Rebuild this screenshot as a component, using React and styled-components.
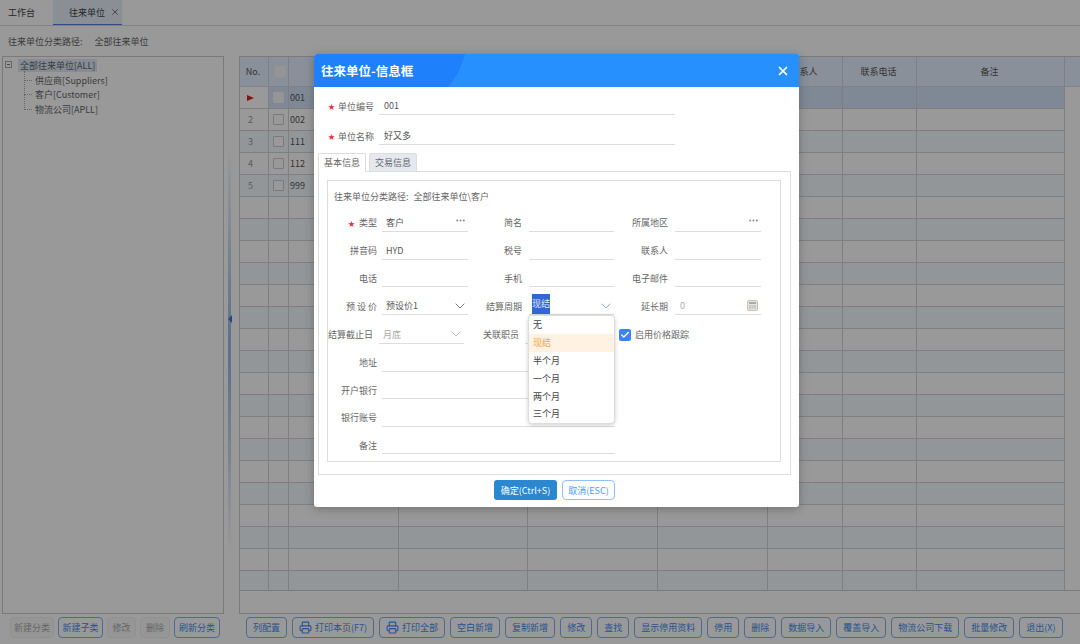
import styled, { createGlobalStyle } from "styled-components"
import { Printer, Check, X, ChevronDown } from "lucide-react"

const GlobalStyle = createGlobalStyle`
    html, body {
        margin: 0;
        padding: 0;
        height: 100%;
        overflow: hidden;
        background: #fff;
    }
    body, input, button {
        font-family: "Noto Sans CJK SC", "Noto Sans", sans-serif;
    }
`

const FONT = 9

const Page = styled.div`
    width: 1080px;
    height: 644px;
    display: flex;
    flex-direction: column;
    font-size: ${FONT}px;
    color: #555;
    overflow: hidden;
`

const TabBar = styled.div`
    height: 25px;
    flex: none;
    display: flex;
    border-bottom: 1px solid #d8d8d8;
`

const PageTab = styled.div`
    height: 25px;
    box-sizing: border-box;
    display: flex;
    align-items: center;
    padding: ${(p) => (p.$active ? "0 2px 0 16px" : "0 18px 0 8px")};
    gap: 5px;
    background: ${(p) => (p.$active ? "#e6effa" : "transparent")};
    border-bottom: ${(p) => (p.$active ? "1px solid #4a80e8" : "none")};
    color: #444;
`

const PathRow = styled.div`
    height: 30px;
    flex: none;
    display: flex;
    align-items: center;
    gap: 12px;
    padding-left: 8px;
    color: #666;
`

const Body = styled.div`
    flex: 1;
    min-height: 0;
    display: flex;
    padding-left: 2px;
`

const TreePanel = styled.div`
    width: 222px;
    box-sizing: border-box;
    height: 558px;
    border: 1px solid #ccc;
    padding-top: 1px;
    position: relative;
`

const TreeNode = styled.div`
    height: 14.7px;
    display: flex;
    align-items: center;
    padding-left: ${(p) => (p.$root ? 15 : 30)}px;
    position: relative;
`

const NodeText = styled.span`
    padding: 0 2px;
    background: ${(p) => (p.$selected ? "#dfeafa" : "transparent")};
    color: #666;
`

const Expander = styled.span`
    position: absolute;
    left: 2px;
    top: 3px;
    width: 7px;
    height: 7px;
    box-sizing: border-box;
    border: 1px solid #aaa;
    background: #fff;
    &::after {
        content: "";
        position: absolute;
        left: 1px;
        top: 2px;
        width: 3px;
        height: 1px;
        background: #777;
    }
`

const Elbow = styled.span`
    position: absolute;
    left: 21px;
    top: ${(p) => (p.$first ? -2 : -7)}px;
    width: 7px;
    height: ${(p) => (p.$first ? 9 : 14)}px;
    border-left: 1px dotted #aaa;
    border-bottom: 1px dotted #aaa;
`

const Splitter = styled.div`
    width: 15px;
    height: 558px;
    flex: none;
    position: relative;
    &::before {
        content: "";
        position: absolute;
        left: 4px;
        top: 90px;
        bottom: 60px;
        width: 3px;
        background: linear-gradient(to bottom, transparent, #9cc0ee 45%, #9cc0ee 55%, transparent);
    }
    &::after {
        content: "";
        position: absolute;
        left: 4px;
        top: 259px;
        width: 0;
        height: 0;
        border-top: 4px solid transparent;
        border-bottom: 4px solid transparent;
        border-right: 4px solid #3a7ae0;
    }
`

const Grid = styled.div`
    flex: 1;
    height: 558px;
    box-sizing: border-box;
    border: 1px solid #ccc;
    border-right: none;
    overflow: hidden;
    background: #fff;
`

const HeaderRow = styled.div`
    display: flex;
    height: 29px;
    background: #e6f0ff;
    border-bottom: 1px solid #d3dbe6;
`

const HeaderCell = styled.div`
    box-sizing: border-box;
    width: ${(p) => p.$w}px;
    flex: none;
    display: flex;
    align-items: center;
    justify-content: center;
    padding-left: ${(p) => p.$shift || 0}px;
    padding-right: ${(p) => (p.$shift ? 0 : 2)}px;
    border-right: 1px solid #cfd8e4;
`

const GridBody = styled.div`
    height: 504px;
    box-sizing: border-box;
    overflow: hidden;
    border-bottom: 1px solid #ccc;
`

const DataRow = styled.div`
    display: flex;
    height: 22px;
    box-sizing: border-box;
    border-bottom: 1px solid #d4d4d4;
    width: 825px;
    background: ${(p) => (p.$selected ? "#d2e4f8" : p.$tint ? "#f4fbfe" : "#fff")};
`

const Cell = styled.div`
    box-sizing: border-box;
    width: ${(p) => p.$w}px;
    flex: none;
    display: flex;
    align-items: center;
    padding-left: ${(p) => p.$pad || 0}px;
    justify-content: ${(p) => (p.$center ? "center" : "flex-start")};
    border-right: 1px solid #d4d4d4;
    color: ${(p) => (p.$muted ? "#999" : "#555")};
    background: ${(p) => p.$bg || "transparent"};
`

const GridCheck = styled.span`
    width: 11px;
    height: 11px;
    box-sizing: border-box;
    border: 1px solid ${(p) => (p.$filled ? "#f8f8f8" : "#ccc")};
    background: ${(p) => (p.$filled ? "#f8f8f8" : "#fff")};
    border-radius: 1px;
`

const Pointer = styled.span`
    width: 0;
    height: 0;
    border-top: 3px solid transparent;
    border-bottom: 3px solid transparent;
    border-left: 7px solid #e02020;
`

const Toolbar = styled.div`
    height: 30px;
    flex: none;
    display: flex;
    align-items: flex-start;
    padding-top: 3px;
    box-sizing: border-box;
`

const ToolGroup = styled.div`
    display: flex;
    gap: ${(p) => p.$gap}px;
    padding-left: ${(p) => p.$left}px;
    width: ${(p) => p.$width || "auto"};
    box-sizing: border-box;
    flex: none;
`

const ToolButton = styled.button`
    height: 21px;
    padding: 0 ${(p) => (p.$w ? 0 : 6)}px;
    width: ${(p) => (p.$w ? `${p.$w}px` : "auto")};
    min-width: ${(p) => p.$min || 0}px;
    display: inline-flex;
    align-items: center;
    justify-content: center;
    gap: 3px;
    white-space: nowrap;
    font-size: ${FONT}px;
    border-radius: 4px;
    background: ${(p) => (p.disabled ? "#fafafa" : "#fff")};
    border: 1px solid ${(p) => (p.disabled ? "#f0f0f0" : "#7db2f5")};
    color: ${(p) => (p.disabled ? "#aaa" : "#3f8cf0")};
`

const Overlay = styled.div`
    position: absolute;
    inset: 0;
    width: 1080px;
    height: 644px;
    background: rgba(0, 0, 0, 0.4);
`

const Dialog = styled.div`
    position: absolute;
    left: 314px;
    top: 54px;
    width: 485px;
    height: 453px;
    background: #fff;
    border-radius: 3px;
    overflow: hidden;
    color: #666;
    box-shadow: 0 2px 10px rgba(0, 0, 0, 0.25);
`

const DialogHeader = styled.div`
    height: 33px;
    display: flex;
    align-items: center;
    justify-content: space-between;
    padding: 0 9px 0 7px;
    background: #1e80fb;
    position: relative;
    overflow: hidden;
    color: #fff;
`

const Title = styled.div`
    font-size: 12.5px;
    font-weight: 700;
    position: relative;
`

const HeaderSwoosh = styled.svg`
    position: absolute;
    left: 0;
    top: 0;
`

const CloseBtn = styled(X)`
    position: relative;
`

const DialogBody = styled.div`
    padding: 4px 8px 0 4px;
`

const TopField = styled.div`
    display: flex;
    align-items: center;
    height: 30px;
    padding-left: 10px;
`

const Star = styled.span`
    color: #e0304a;
    font-size: 7px;
    width: 10px;
    flex: none;
`

const TopLabel = styled.span`
    width: 41px;
    flex: none;
`

const LineBox = styled.div`
    box-sizing: border-box;
    width: ${(p) => p.$w}px;
    height: 18px;
    flex: none;
    border-bottom: 1px solid #ddd;
    display: flex;
    align-items: center;
    justify-content: space-between;
    padding: 0 ${(p) => p.$pr ?? 3}px 0 ${(p) => p.$pl ?? 4}px;
    color: ${(p) => (p.$muted ? "#aaa" : "#555")};
`

const TabStrip = styled.div`
    display: flex;
    gap: 3px;
    margin: 2px 0 -1px;
    height: 19px;
    position: relative;
`

const InnerTab = styled.div`
    box-sizing: border-box;
    padding: 0 5px;
    display: flex;
    align-items: center;
    border: 1px solid #ddd;
    border-bottom: ${(p) => (p.$active ? "1px solid #ddd" : "1px solid #fff")};
    background: ${(p) => (p.$active ? "#e5e9ef" : "#fff")};
    border-radius: 2px 2px 0 0;
    color: #666;
`

const TabPanel = styled.div`
    box-sizing: border-box;
    height: 304px;
    border: 1px solid #ddd;
    padding: 8px 9px 0 8px;
`

const Fieldset = styled.div`
    box-sizing: border-box;
    height: 282px;
    border: 1px solid #ddd;
    position: relative;
`

const PathLine = styled.div`
    height: 28px;
    box-sizing: border-box;
    display: flex;
    align-items: center;
    padding: 3px 0 0 6px;
    gap: 5px;
    color: #666;
`

const FormGrid = styled.div`
    display: grid;
    grid-template-columns: 146px 146px 146px;
    grid-template-rows: repeat(4, 27.75px) 29px repeat(4, 27.5px);
`

const Field = styled.div`
    display: flex;
    align-items: center;
    grid-column: ${(p) => p.$span || "auto"};
`

const FieldLabel = styled.span`
    box-sizing: border-box;
    width: ${(p) => p.$w || (p.$first ? 49 : 48)}px;
    margin-right: ${(p) => p.$gap ?? (p.$first ? 5 : 7)}px;
    flex: none;
    text-align: right;
    white-space: pre;
`

const LabelStar = styled.span`
    color: #e0304a;
    font-size: 7px;
    margin-right: 4px;
`

const Dots = styled.svg`
    flex: none;
    margin-top: -4px;
`

const Selected = styled.span`
    align-self: flex-end;
    height: 20px;
    line-height: 20px;
    background: #3367d6;
    color: #dfe8ff;
`

const CheckField = styled.div`
    display: flex;
    align-items: center;
    gap: 4px;
    margin-left: -1px;
`

const CheckBox = styled.span`
    width: 12px;
    height: 12px;
    border-radius: 2px;
    background: #3b82f6;
    display: flex;
    align-items: center;
    justify-content: center;
`

const Calc = styled.svg`
    flex: none;
`

const Dropdown = styled.div`
    position: absolute;
    left: 201px;
    top: 135px;
    width: 85px;
    height: 107px;
    box-sizing: border-box;
    background: #fff;
    border-radius: 3px;
    box-shadow: 0 0 0 1px #ddd, 0 1px 5px rgba(0, 0, 0, 0.3);
`

const DropItem = styled.div`
    height: 17.8px;
    display: flex;
    align-items: center;
    padding-left: 4px;
    color: ${(p) => (p.$active ? "#f5a54a" : "#444")};
    background: ${(p) => (p.$active ? "#fff2e3" : "transparent")};
`

const Footer = styled.div`
    display: flex;
    justify-content: flex-end;
    gap: 5px;
    padding: 5px 176px 0 0;
`

const OkButton = styled.button`
    height: 20px;
    width: 63px;
    padding: 0;
    border: none;
    border-radius: 3px;
    font-size: ${FONT}px;
    color: #fff;
    background: #2a87d0;
`

const CancelButton = styled.button`
    height: 20px;
    width: 53px;
    padding: 0;
    font-size: ${FONT}px;
    border-radius: 4px;
    color: #4a9af5;
    background: #fff;
    border: 1px solid #90c0ff;
`

const COLS = [29, 20, 110, 129, 130, 110, 75, 74, 148]
const HEADERS = ["No.", "", "", "", "", "", "联系人", "联系电话", "备注"]
const CODES = ["001", "002", "111", "112", "999"]
const LEFT_TOOLS = [
    { t: "新建分类", off: true, w: 44 },
    { t: "新建子类", w: 45 },
    { t: "修改", off: true, w: 29 },
    { t: "删除", off: true, w: 30 },
    { t: "刷新分类", w: 46 },
]
const RIGHT_TOOLS = [
    { t: "列配置" },
    { t: "打印本页(F7)", icon: true, min: 82 },
    { t: "打印全部", icon: true },
    { t: "空白新增" },
    { t: "复制新增" },
    { t: "修改" },
    { t: "查找" },
    { t: "显示停用资料" },
    { t: "停用" },
    { t: "删除" },
    { t: "数据导入" },
    { t: "覆盖导入" },
    { t: "物流公司下载" },
    { t: "批量修改" },
    { t: "退出(X)" },
]
const PERIODS = ["无", "现结", "半个月", "一个月", "两个月", "三个月"]

function GridRow({ index }) {
    const code = CODES[index]
    const selected = index === 0
    return (
        <DataRow $selected={selected} $tint={index % 2 === 0}>
            {COLS.map((w, c) => {
                if (c === 0) {
                    return (
                        <Cell key={c} $w={w} $pad={selected ? 7 : 8} $muted $bg={selected ? "#fff" : undefined}>
                            {selected ? <Pointer /> : code ? index + 1 : ""}
                        </Cell>
                    )
                }
                if (c === 1) {
                    return (
                        <Cell key={c} $w={w} $center>
                            {code && <GridCheck $filled={selected} />}
                        </Cell>
                    )
                }
                return (
                    <Cell key={c} $w={w} $pad={1}>
                        {c === 2 ? code : ""}
                    </Cell>
                )
            })}
        </DataRow>
    )
}

function Tool({ item }) {
    return (
        <ToolButton disabled={item.off} $w={item.w} $min={item.min}>
            {item.icon && <Printer size={13} strokeWidth={2} />}
            {item.t}
        </ToolButton>
    )
}

function MoreDots() {
    return (
        <Dots width="9" height="3" viewBox="0 0 9 3">
            <circle cx="1.2" cy="1.5" r="1" fill="#888" />
            <circle cx="4.5" cy="1.5" r="1" fill="#888" />
            <circle cx="7.8" cy="1.5" r="1" fill="#888" />
        </Dots>
    )
}

export default function App() {
    return (
        <Page>
            <GlobalStyle />
            <TabBar>
                <PageTab>工作台</PageTab>
                <PageTab $active>
                    往来单位
                    <X size={10} color="#666" />
                </PageTab>
            </TabBar>
            <PathRow>
                <span>往来单位分类路径:</span>
                <span>全部往来单位</span>
            </PathRow>
            <Body>
                <TreePanel>
                    <TreeNode $root>
                        <Expander />
                        <NodeText $selected>全部往来单位[ALL]</NodeText>
                    </TreeNode>
                    <TreeNode>
                        <Elbow $first />
                        <NodeText>供应商[Suppliers]</NodeText>
                    </TreeNode>
                    <TreeNode>
                        <Elbow />
                        <NodeText>客户[Customer]</NodeText>
                    </TreeNode>
                    <TreeNode>
                        <Elbow />
                        <NodeText>物流公司[APLL]</NodeText>
                    </TreeNode>
                </TreePanel>
                <Splitter />
                <Grid>
                    <HeaderRow>
                        {COLS.map((w, c) => (
                            <HeaderCell key={c} $w={w} $shift={c === 1 ? 3 : 0}>
                                {c === 1 ? <GridCheck $filled /> : HEADERS[c]}
                            </HeaderCell>
                        ))}
                    </HeaderRow>
                    <GridBody>
                        {Array.from({ length: 23 }, (_, i) => (
                            <GridRow key={i} index={i} />
                        ))}
                    </GridBody>
                </Grid>
            </Body>
            <Toolbar>
                <ToolGroup $gap={4} $left={10} $width="246px">
                    {LEFT_TOOLS.map((item) => (
                        <Tool key={item.t} item={item} />
                    ))}
                </ToolGroup>
                <ToolGroup $gap={5} $left={0}>
                    {RIGHT_TOOLS.map((item) => (
                        <Tool key={item.t} item={item} />
                    ))}
                </ToolGroup>
            </Toolbar>

            <Overlay />
            <Dialog>
                <DialogHeader>
                    <HeaderSwoosh width="485" height="33" viewBox="0 0 485 33">
                        <path d="M134 33 C144 22 149 8 151 0 L485 0 L485 33 Z" fill="#2690ff" />
                    </HeaderSwoosh>
                    <Title>往来单位-信息框</Title>
                    <CloseBtn size={14} strokeWidth={3} color="#fff" />
                </DialogHeader>
                <DialogBody>
                    <TopField>
                        <Star>★</Star>
                        <TopLabel>单位编号</TopLabel>
                        <LineBox $w={296} $pl={5}>001</LineBox>
                    </TopField>
                    <TopField>
                        <Star>★</Star>
                        <TopLabel>单位名称</TopLabel>
                        <LineBox $w={296} $pl={5}>好又多</LineBox>
                    </TopField>
                    <TabStrip>
                        <InnerTab>基本信息</InnerTab>
                        <InnerTab $active>交易信息</InnerTab>
                    </TabStrip>
                    <TabPanel>
                        <Fieldset>
                            <PathLine>
                                <span>往来单位分类路径:</span>
                                <span>全部往来单位\客户</span>
                            </PathLine>
                            <FormGrid>
                                <Field>
                                    <FieldLabel $first>
                                        <LabelStar>★</LabelStar>类型
                                    </FieldLabel>
                                    <LineBox $w={86}>
                                        客户<MoreDots />
                                    </LineBox>
                                </Field>
                                <Field>
                                    <FieldLabel>简名</FieldLabel>
                                    <LineBox $w={85} />
                                </Field>
                                <Field>
                                    <FieldLabel>所属地区</FieldLabel>
                                    <LineBox $w={86}>
                                        <span />
                                        <MoreDots />
                                    </LineBox>
                                </Field>

                                <Field>
                                    <FieldLabel $first>拼音码</FieldLabel>
                                    <LineBox $w={86}>HYD</LineBox>
                                </Field>
                                <Field>
                                    <FieldLabel>税号</FieldLabel>
                                    <LineBox $w={85} />
                                </Field>
                                <Field>
                                    <FieldLabel>联系人</FieldLabel>
                                    <LineBox $w={86} />
                                </Field>

                                <Field>
                                    <FieldLabel $first>电话</FieldLabel>
                                    <LineBox $w={86} />
                                </Field>
                                <Field>
                                    <FieldLabel>手机</FieldLabel>
                                    <LineBox $w={85} />
                                </Field>
                                <Field>
                                    <FieldLabel>电子邮件</FieldLabel>
                                    <LineBox $w={86} />
                                </Field>

                                <Field>
                                    <FieldLabel $first>预 设 价</FieldLabel>
                                    <LineBox $w={86} $pr={0}>
                                        预设价1
                                        <ChevronDown size={16} strokeWidth={1.5} color="#777" />
                                    </LineBox>
                                </Field>
                                <Field>
                                    <FieldLabel>结算周期</FieldLabel>
                                    <LineBox $w={85} $pr={0} $pl={3}>
                                        <Selected>现结</Selected>
                                        <ChevronDown size={16} strokeWidth={1.5} color="#8ab0dc" />
                                    </LineBox>
                                </Field>
                                <Field>
                                    <FieldLabel>延长期</FieldLabel>
                                    <LineBox $w={86} $muted $pl={5}>
                                        0
                                        <Calc width="11" height="11" viewBox="0 0 11 11">
                                            <rect x="0.5" y="0.5" width="10" height="10" rx="1.5" fill="#e6e6e6" stroke="#ccc2a8" />
                                            <rect x="2" y="2" width="7" height="2" fill="#aaa" />
                                            <path d="M2 6h2M4.5 6h2M7 6h2M2 8h2M4.5 8h2M7 8h2" stroke="#aaa" />
                                        </Calc>
                                    </LineBox>
                                </Field>

                                <Field>
                                    <FieldLabel $w={45} $gap={6}>结算截止日</FieldLabel>
                                    <LineBox $w={85} $muted $pr={0}>
                                        月底
                                        <ChevronDown size={16} strokeWidth={1.5} color="#bbb" />
                                    </LineBox>
                                </Field>
                                <Field>
                                    <FieldLabel $w={45} $gap={6}>关联职员</FieldLabel>
                                    <LineBox $w={85} />
                                </Field>
                                <Field>
                                    <CheckField>
                                        <CheckBox>
                                            <Check size={10} strokeWidth={3.5} color="#fff" />
                                        </CheckBox>
                                        启用价格跟踪
                                    </CheckField>
                                </Field>

                                <Field $span="1 / span 2">
                                    <FieldLabel $first>地址</FieldLabel>
                                    <LineBox $w={233} />
                                </Field>
                                <span />
                                <Field $span="1 / span 2">
                                    <FieldLabel $first>开户银行</FieldLabel>
                                    <LineBox $w={233} />
                                </Field>
                                <span />
                                <Field $span="1 / span 2">
                                    <FieldLabel $first>银行账号</FieldLabel>
                                    <LineBox $w={233} />
                                </Field>
                                <span />
                                <Field $span="1 / span 2">
                                    <FieldLabel $first>备注</FieldLabel>
                                    <LineBox $w={233} />
                                </Field>
                            </FormGrid>
                            <Dropdown>
                                {PERIODS.map((p) => (
                                    <DropItem key={p} $active={p === "现结"}>
                                        {p}
                                    </DropItem>
                                ))}
                            </Dropdown>
                        </Fieldset>
                    </TabPanel>
                    <Footer>
                        <OkButton>确定(Ctrl+S)</OkButton>
                        <CancelButton>取消(ESC)</CancelButton>
                    </Footer>
                </DialogBody>
            </Dialog>
        </Page>
    )
}
